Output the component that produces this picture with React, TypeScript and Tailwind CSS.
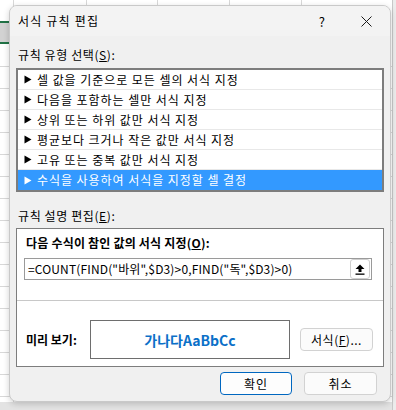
import React from "react";

const font = { fontFamily: '"Noto Sans CJK KR", "Noto Sans", sans-serif' };

const rows = [
  "셀 값을 기준으로 모든 셀의 서식 지정",
  "다음을 포함하는 셀만 서식 지정",
  "상위 또는 하위 값만 서식 지정",
  "평균보다 크거나 작은 값만 서식 지정",
  "고유 또는 중복 값만 서식 지정",
  "수식을 사용하여 서식을 지정할 셀 결정",
];

function Tri({ white }: { white?: boolean }) {
  return (
    <svg width="8" height="9" viewBox="0 0 8 9" className="shrink-0">
      <path d="M0.5 0.5 L7.5 4.5 L0.5 8.5 Z" fill={white ? "#ffffff" : "#000000"} />
    </svg>
  );
}

export default function App() {
  const vlines = [13, 86, 157, 229, 301];
  const hlines = [66, 88, 110, 132, 154, 176, 198, 220, 242, 264, 286, 308, 330, 352, 374, 396];
  return (
    <div className="relative w-[396px] h-[410px] overflow-hidden bg-white text-[12px] text-black" style={font}>
      {/* spreadsheet background */}
      {vlines.map((x) => (
        <div key={"v" + x} className="absolute top-0 h-[410px] w-px bg-[#d8d8d8]" style={{ left: x }} />
      ))}
      {hlines.map((y) => (
        <div key={"h" + y} className="absolute left-0 w-[396px] h-px bg-[#d8d8d8]" style={{ top: y }} />
      ))}
      <div className="absolute left-0 top-[21px] w-[12px] h-[23px] bg-[#d2d2d2] border-y-2 border-[#217346]" />
      <div className="absolute left-0 top-[402px] w-[396px] h-[8px] bg-[#e3e3e3]" />
      <div className="absolute left-[392px] top-0 w-[4px] h-[410px] bg-[#ececec] border-l border-[#c8c8c8]" />

      {/* dialog */}
      <div className="absolute left-[9px] top-[5px] w-[382px] h-[397px] rounded-[8px] bg-[#f0f0f0] border border-[#c9c9c9] shadow-[0_2px_6px_rgba(0,0,0,0.18)] flex flex-col overflow-hidden">
        <div className="h-[30px] shrink-0 flex items-center pl-[8px] bg-[#f3f3f3]">
          <span className="text-[12px] leading-none tracking-[1.2px]">서식 규칙 편집</span>
          <span className="ml-auto text-[13px] leading-none mr-[36px]">?</span>
          <svg width="11" height="11" viewBox="0 0 11 11" className="mr-[18px]">
            <path d="M0.5 0.5 L10.5 10.5 M10.5 0.5 L0.5 10.5" stroke="#1a1a1a" strokeWidth="1" />
          </svg>
        </div>
        <div className="px-[6px] flex flex-col">
          <div className="mt-[11px] h-[16px] leading-[16px] pl-[2px] tracking-[0.6px]">
            규칙 유형 선택(<span className="underline">S</span>):
          </div>
          <div className="mt-[5px] h-[124px] border-2 border-[#7d7d7d] bg-white flex flex-col">
            {rows.map((r, i) => {
              const sel = i === rows.length - 1;
              return (
                <div
                  key={r}
                  className={
                    "h-[20px] shrink-0 flex items-center gap-[5px] pl-[6px] " +
                    (sel ? "bg-[#3399ff] text-white" : "border-b border-[#e8e8e8]")
                  }
                >
                  <Tri white={sel} />
                  <span className="leading-none tracking-[0.95px]">{r}</span>
                </div>
              );
            })}
          </div>
          <div className="mt-[16px] h-[16px] leading-[16px] pl-[2px] tracking-[0.6px]">
            규칙 설명 편집(<span className="underline">E</span>):
          </div>
          <div className="mt-[4px] h-[139px] border border-[#7d7d7d] bg-white flex flex-col">
            <div className="mt-[6px] h-[16px] leading-[16px] pl-[9px] font-bold tracking-[0.2px]">
              다음 수식이 참인 값의 서식 지정(<span className="underline">O</span>):
            </div>
            <div className="mt-[7px] ml-[7px] mr-[11px] h-[22px] border border-[#9a9a9a] flex items-center pl-[3px] pr-px">
              <span className="leading-none tracking-[0.15px]">=COUNT(FIND("바위",$D3)&gt;0,FIND("독",$D3)&gt;0)</span>
              <div className="ml-auto w-[20px] h-[20px] rounded-[3px] border border-[#cfcfcf] bg-white flex items-center justify-center">
                <svg width="10" height="11" viewBox="0 0 10 11">
                  <path d="M5 0.5 L9.5 5 L6.5 5 L6.5 8 L3.5 8 L3.5 5 L0.5 5 Z" fill="#000" />
                  <rect x="0.5" y="9.5" width="9" height="1.3" fill="#000" />
                </svg>
              </div>
            </div>
            <div className="mt-[20px] h-px bg-[#c8c8c8]" />
            <div className="mt-[19px] flex items-center">
              <span className="ml-[9px] w-[64px] font-bold leading-none">미리 보기:</span>
              <div className="w-[200px] h-[39px] border border-[#6e6e6e] flex items-center justify-center">
                <span className="text-[14px] font-bold text-[#0b70c8] leading-none">가나다AaBbCc</span>
              </div>
              <div className="ml-[10px] w-[73px] h-[23px] rounded-[4px] border border-[#d2d2d2] bg-[#fbfbfb] flex items-center justify-center leading-none tracking-[0.5px]">
                서식(<span className="underline">F</span>)...
              </div>
            </div>
          </div>
          <div className="mt-[5px] flex justify-end gap-[12px] pr-[7px]">
            <div className="w-[72px] h-[23px] rounded-[4px] border border-[#0067c0] bg-[#fdfdfd] flex items-center justify-center leading-none tracking-[1px]">
              확인
            </div>
            <div className="w-[73px] h-[23px] rounded-[4px] border border-[#d2d2d2] bg-[#fbfbfb] flex items-center justify-center leading-none tracking-[1px]">
              취소
            </div>
          </div>
        </div>
      </div>
    </div>
  );
}
